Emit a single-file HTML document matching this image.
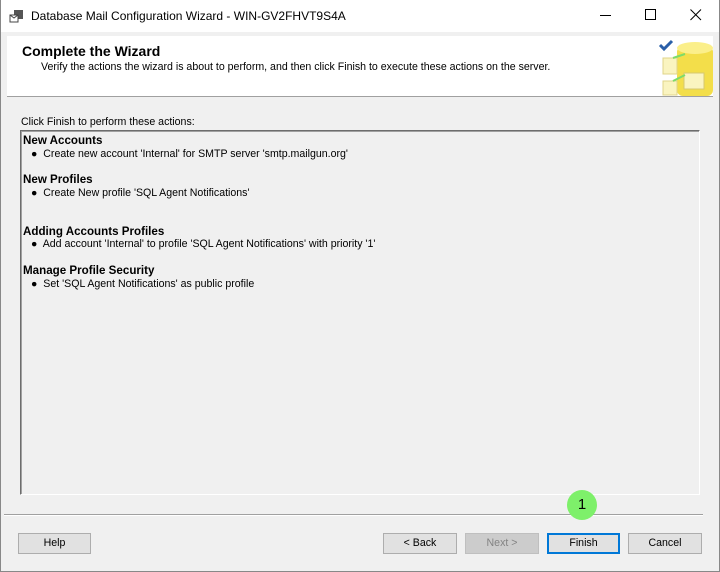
<!DOCTYPE html>
<html><head><style>
*{margin:0;padding:0;box-sizing:border-box}
body{width:720px;height:572px;overflow:hidden;background:#f0f0f0;font-family:"Liberation Sans",Arial,sans-serif;font-size:10.6px;color:#000;position:relative}
.win{position:absolute;left:0;top:0;width:720px;height:572px;border:1px solid #888;border-top:none}
.title{position:absolute;left:0;top:0;width:720px;height:32px;background:#fff;}
.title span{position:absolute;left:31px;top:9px;font-size:12px}
.hdr{position:absolute;left:7px;top:36px;width:706px;height:61px;background:#fff;border-bottom:1px solid #a0a0a0}
.abs{position:absolute}
.btn{position:absolute;top:533px;height:21px;background:#e1e1e1;border:1px solid #adadad;text-align:center;line-height:19px;font-size:10.6px}
.box{position:absolute;left:20px;top:130px;width:680px;height:365px;border-left:1px solid #6d6d6d;border-top:1px solid #6d6d6d;border-right:1px solid #fff;border-bottom:1px solid #fff;box-shadow:inset 1px 1px 0 #a0a0a0}
.h{font-weight:bold;font-size:11.6px;position:absolute;left:2px}
.b{position:absolute;left:10px}
</style></head><body>
<div class="title">
<svg class="abs" style="left:9px;top:9px" width="16" height="14"><rect x="5" y="1" width="9" height="9" fill="#555"/><rect x="1" y="6" width="8" height="7" fill="#fff" stroke="#444"/><path d="M1 6l4 3 4-3" stroke="#444" fill="none"/></svg>
<span>Database Mail Configuration Wizard - WIN-GV2FHVT9S4A</span>
<svg class="abs" style="left:600px;top:15px" width="12" height="2"><rect width="11" height="1" fill="#000"/></svg>
<svg class="abs" style="left:645px;top:9px" width="12" height="12"><rect x="0.5" y="0.5" width="10" height="10" fill="none" stroke="#000"/></svg>
<svg class="abs" style="left:690px;top:9px" width="12" height="12"><path d="M0.5 0.5L11 11M11 0.5L0.5 11" stroke="#000"/></svg>
</div>
<div class="hdr">
<div class="abs" style="left:15px;top:7px;font-weight:bold;font-size:14px">Complete the Wizard</div>
<div class="abs" style="left:34px;top:25px">Verify the actions the wizard is about to perform, and then click Finish to execute these actions on the server.</div>
<svg class="abs" style="left:646px;top:0" width="60" height="61">
<path d="M7 9l4 4 8-8" stroke="#2a5fa8" stroke-width="3" fill="none"/>
<rect x="24" y="10" width="36" height="50" rx="6" fill="#f3de4a"/>
<ellipse cx="42" cy="12" rx="18" ry="6" fill="#fbef8a"/>
<rect x="10" y="22" width="14" height="16" fill="#faf4c0" stroke="#e0d48a"/>
<rect x="10" y="45" width="14" height="14" fill="#faf4c0" stroke="#e0d48a"/>
<rect x="31" y="37" width="20" height="16" fill="#faf4c0" stroke="#d6c870"/>
<path d="M20 22l12-4M20 45l12-6" stroke="#7ddc6a" stroke-width="2"/>
</svg>
</div>
<div class="abs" style="left:21px;top:116px">Click Finish to perform these actions:</div>
<div class="box">
<div class="h" style="top:3px">New Accounts</div>
<div class="b" style="top:17px">●&nbsp; Create new account 'Internal' for SMTP server 'smtp.mailgun.org'</div>
<div class="h" style="top:42px">New Profiles</div>
<div class="b" style="top:56px">●&nbsp; Create New profile 'SQL Agent Notifications'</div>
<div class="h" style="top:94px">Adding Accounts Profiles</div>
<div class="b" style="top:107px">●&nbsp; Add account 'Internal' to profile 'SQL Agent Notifications' with priority '1'</div>
<div class="h" style="top:133px">Manage Profile Security</div>
<div class="b" style="top:147px">●&nbsp; Set 'SQL Agent Notifications' as public profile</div>
</div>
<div class="abs" style="left:4px;top:514px;width:699px;height:2px;border-top:1px solid #a0a0a0;border-bottom:1px solid #fff"></div>
<div class="abs" style="left:567px;top:490px;width:30px;height:30px;border-radius:50%;background:#7ef06a;text-align:center;line-height:30px;font-size:15px">1</div>
<div class="btn" style="left:18px;width:73px">Help</div>
<div class="btn" style="left:383px;width:74px">&lt; Back</div>
<div class="btn" style="left:465px;width:74px;background:#ccc;border-color:#bfbfbf;color:#838383">Next &gt;</div>
<div class="btn" style="left:547px;width:73px;border:1px solid #0078d7;box-shadow:inset 0 0 0 1px #0078d7">Finish</div>
<div class="btn" style="left:628px;width:74px">Cancel</div>
<div class="win"></div>
</body></html>
